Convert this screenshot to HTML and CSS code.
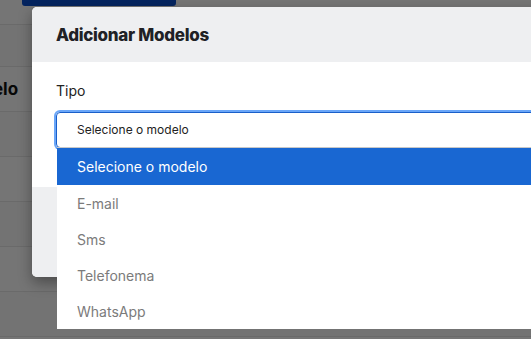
FILE: index.html
```html
<!DOCTYPE html>
<html lang="pt">
<head>
<meta charset="utf-8">
<link rel="stylesheet" href="styles.css">
</head>
<body>
<div class="page">
  <div class="topnav"><div class="topbar"></div></div>
  <div class="rows">
    <div class="row"></div>
    <div class="row alt"><span class="cell">Modelo</span></div>
    <div class="row"></div>
    <div class="row alt"></div>
    <div class="row"></div>
    <div class="row alt"></div>
    <div class="row"></div>
  </div>
</div>
<div class="overlay"></div>
<div class="modal">
  <div class="modal-header"><h2 class="modal-title">Adicionar Modelos</h2></div>
  <div class="modal-body">
    <label class="field-label">Tipo</label>
    <div class="select">Selecione o modelo</div>
  </div>
  <div class="modal-footer"></div>
</div>
<ul class="dropdown">
  <li class="option selected">Selecione o modelo</li>
  <li class="option">E-mail</li>
  <li class="option">Sms</li>
  <li class="option">Telefonema</li>
  <li class="option">WhatsApp</li>
</ul>
</body>
</html>
```

FILE: styles.css
```css
html, body {
  margin: 0;
  padding: 0;
  width: 531px;
  height: 339px;
  overflow: hidden;
  background: #ffffff;
  font-family: Inter, "Noto Sans", sans-serif;
}
.page {
  width: 531px;
}
.topnav {
  height: 25px;
  border-bottom: 1px solid #e8e8e8;
  box-sizing: border-box;
  padding-left: 22px;
}
.topbar {
  width: 154px;
  height: 6px;
  background: #0a4fd0;
  border-radius: 0 0 3px 3px;
}
.rows {
  display: flex;
  flex-direction: column;
}
.row {
  height: 45px;
  border-bottom: 1px solid #e6e6e6;
  box-sizing: border-box;
  display: flex;
  align-items: center;
  background: #fbfbfb;
}
.row:first-child { height: 42px; }
.row.alt { background: #ffffff; }
.cell {
  font-weight: 700;
  font-size: 17px;
  color: #111;
  margin-left: -44px;
}
.overlay {
  position: absolute;
  inset: 0;
  background: rgba(0, 0, 0, 0.54);
}
.modal {
  position: absolute;
  left: 32px;
  top: 7px;
  width: 560px;
  background: #ffffff;
  border-radius: 5px;
  overflow: hidden;
  box-shadow: 0 6px 14px rgba(0, 0, 0, 0.35);
}
.modal-header {
  height: 55px;
  background: #eeeff1;
  display: flex;
  align-items: center;
  padding-left: 24px;
}
.modal-title {
  margin: 0;
  font-size: 17px;
  font-weight: 800;
  color: #202125;
  letter-spacing: -0.3px;
}
.modal-body {
  padding: 20px 0 40px 24px;
  height: 125px;
  box-sizing: border-box;
}
.field-label {
  display: block;
  font-size: 14px;
  color: #222222;
  line-height: 18px;
  margin-bottom: 12px;
}
.select {
  height: 36px;
  box-sizing: border-box;
  border: 1px solid #1a5fc9;
  border-radius: 4px;
  box-shadow: 0 0 0 2px #6aa6f8;
  padding-left: 20px;
  padding-bottom: 2px;
  display: flex;
  align-items: center;
  font-size: 12px;
  color: #222222;
}
.modal-footer {
  height: 90px;
  background: #eeeff1;
}
.dropdown {
  position: absolute;
  left: 57px;
  top: 147px;
  width: 490px;
  margin: 0;
  padding: 0;
  list-style: none;
  background: #ffffff;
  border-top: 1px solid #c8c8c8;
}
.option {
  height: 36px;
  display: flex;
  align-items: center;
  padding-left: 20px;
  font-size: 14px;
  color: #7b7b7b;
}
.option.selected {
  height: 37px;
  background: #1967d2;
  color: #ffffff;
}
```
